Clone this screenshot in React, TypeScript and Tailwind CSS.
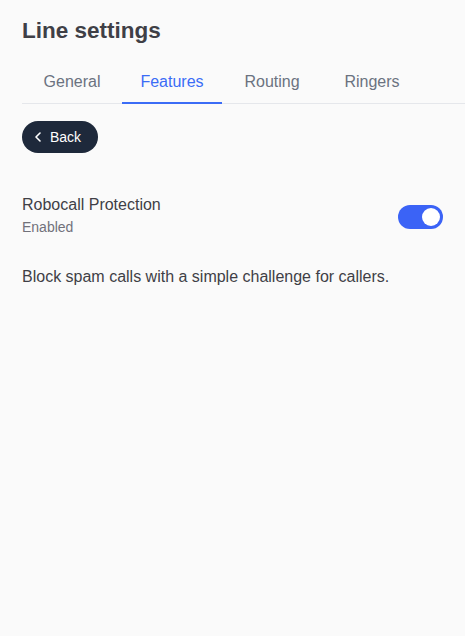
import { useState } from 'react'

const tabs = ['General', 'Features', 'Routing', 'Ringers']

function Toggle({ on, onChange }: { on: boolean; onChange: (v: boolean) => void }) {
  return (
    <button
      role="switch"
      aria-checked={on}
      onClick={() => onChange(!on)}
      className={`relative h-6 w-[45px] shrink-0 rounded-full transition-colors ${on ? 'bg-[#3b63f6]' : 'bg-gray-300'}`}
    >
      <span
        className={`absolute top-[3px] h-[18px] w-[18px] rounded-full bg-white transition-all ${on ? 'left-[24px]' : 'left-[3px]'}`}
      />
    </button>
  )
}

export default function App() {
  const [active, setActive] = useState('Features')
  const [enabled, setEnabled] = useState(true)

  return (
    <div className="min-h-screen bg-[#fafafa] pt-[17px] px-[22px] font-['Liberation_Sans',Arial,sans-serif]">
      <h1 className="text-[22.5px] leading-7 font-bold text-[#3f3f46]">Line settings</h1>

      <div className="mt-3 -mr-[22px] flex border-b border-[#e5e7eb]">
        {tabs.map((t) => (
          <button
            key={t}
            onClick={() => setActive(t)}
            className={`-mb-px w-[100px] pt-[13px] pb-2 text-base leading-6 border-b-2 ${
              active === t ? 'border-[#3b6cf6] text-[#3b6cf6]' : 'border-transparent text-[#6b7280]'
            }`}
          >
            {t}
          </button>
        ))}
      </div>

      <button className="mt-[17px] flex h-8 items-center gap-[9px] rounded-full bg-[#1e293b] pl-[13px] pr-[17px] text-sm text-white">
        <svg width="6" height="10" viewBox="0 0 6 10" fill="none">
          <path d="M5 1 1 5l4 4" stroke="currentColor" strokeWidth="1.6" strokeLinecap="round" strokeLinejoin="round" />
        </svg>
        Back
      </button>

      <div className="mt-[40px] flex items-start justify-between">
        <div>
          <div className="text-base leading-6 text-[#3f3f46]">Robocall Protection</div>
          <div className="text-sm leading-5 text-[#71717a]">{enabled ? 'Enabled' : 'Disabled'}</div>
        </div>
        <div className="mt-[12px]">
          <Toggle on={enabled} onChange={setEnabled} />
        </div>
      </div>

      <p className="mt-[28px] text-base leading-6 text-[#3f3f46]">
        Block spam calls with a simple challenge for callers.
      </p>
    </div>
  )
}
